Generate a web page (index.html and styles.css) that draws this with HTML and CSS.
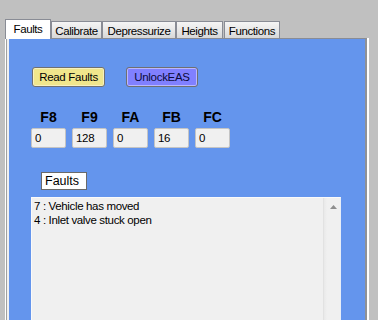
FILE: index.html
```html
<!DOCTYPE html>
<html>
<head>
<meta charset="utf-8">
<link rel="stylesheet" href="styles.css">
</head>
<body>
<div class="tabs">
  <div class="tab active">Faults</div>
  <div class="tab w-cal">Calibrate</div>
  <div class="tab w-dep">Depressurize</div>
  <div class="tab w-hei">Heights</div>
  <div class="tab w-fun">Functions</div>
</div>
<div class="panel">
  <div class="page">
    <div class="buttons">
      <button class="btn btn-read">Read Faults</button>
      <button class="btn btn-unlock">UnlockEAS</button>
    </div>
    <div class="fields">
      <div class="field"><div class="flabel">F8</div><div class="fbox">0</div></div>
      <div class="field"><div class="flabel">F9</div><div class="fbox">128</div></div>
      <div class="field"><div class="flabel">FA</div><div class="fbox">0</div></div>
      <div class="field"><div class="flabel">FB</div><div class="fbox">16</div></div>
      <div class="field"><div class="flabel">FC</div><div class="fbox">0</div></div>
    </div>
    <div class="caption">Faults</div>
    <div class="listbox">
      <div class="items">
        <div class="item">7 : Vehicle has moved</div>
        <div class="item">4 : Inlet valve stuck open</div>
      </div>
      <div class="scrollbar">
        <svg class="arrow" width="7" height="4" viewBox="0 0 7 4"><polygon points="3.5,0 7,4 0,4" fill="#8e8e8e"/></svg>
      </div>
    </div>
  </div>
</div>
</body>
</html>
```

FILE: styles.css
```css
html, body {
  margin: 0;
  padding: 0;
}
body {
  background: #c0c0c0;
  font-family: "Liberation Sans", Arial, sans-serif;
  font-size: 11px;
  color: #000;
  height: 320px;
  overflow: hidden;
}
.tabs {
  display: flex;
  align-items: flex-end;
  padding: 19px 0 0 5px;
  height: 19px;
}
.tab {
  box-sizing: border-box;
  height: 17px;
  border: 1px solid #898c95;
  border-bottom: none;
  background: linear-gradient(#f5f5f5, #e6e6e6 55%, #d8d8d8);
  text-align: center;
  font-size: 11.5px;
  line-height: 14px;
  padding-top: 2px;
  letter-spacing: -0.4px;
  white-space: nowrap;
}
.tab.active {
  width: 46px;
  height: 20px;
  background: #fff;
  margin-bottom: -1px;
  position: relative;
  z-index: 1;
  padding-top: 2px;
}
.w-cal { width: 51px; }
.w-dep { width: 74px; }
.w-hei { width: 47px; }
.w-fun { width: 56px; margin-left: 1px; }
.panel {
  box-sizing: border-box;
  margin-left: 6px;
  width: 361px;
  height: 282px;
  border-top: 1px solid #898c95;
  border-left: 1px solid #a0a0a0;
  border-right: 2px solid #8f9196;
  box-shadow: -1px 0 0 #fff, 2px 0 0 #fff;
  padding-left: 2px;
  background: #f0f0f0;
}
.page {
  background: #6495ed;
  height: 281px;
  box-sizing: border-box;
  padding: 28px 0 0 22px;
}
.buttons {
  display: flex;
  gap: 21px;
  margin-left: 1px;
}
.btn {
  box-sizing: border-box;
  height: 20px;
  border: 1px solid #707070;
  border-radius: 3px;
  box-shadow: inset 0 0 0 1px rgba(255,255,255,0.45);
  font-family: "Liberation Sans", Arial, sans-serif;
  font-size: 11.5px;
  letter-spacing: -0.3px;
  line-height: 16px;
  padding: 0;
  color: #000;
}
.btn-read { width: 73px; background: #f0e68c; }
.btn-unlock { width: 72px; background: #8080ff; color: #0a0a3a; }
.fields {
  display: grid;
  grid-template-columns: repeat(5, 35px);
  column-gap: 6px;
  margin-top: 23px;
}
.flabel {
  font-weight: bold;
  font-size: 14px;
  line-height: 14px;
  text-align: center;
}
.fbox {
  box-sizing: border-box;
  margin-top: 4px;
  height: 20px;
  border: 1px solid #c4c4c4;
  border-radius: 2px;
  background: #f0f0f0;
  padding-left: 3px;
  line-height: 18px;
  font-size: 11.5px;
  letter-spacing: -0.3px;
}
.caption {
  box-sizing: border-box;
  margin: 24px 0 0 10px;
  width: 46px;
  height: 18px;
  border: 1px solid #6a6a6a;
  background: #fff;
  font-size: 12.5px;
  line-height: 16px;
  padding-left: 3px;
}
.listbox {
  box-sizing: border-box;
  margin-top: 7px;
  width: 310px;
  height: 124px;
  border: 1px solid #fafafa;
  border-right-color: #e8eef8;
  border-bottom: none;
  background: #f0f0f0;
  display: flex;
}
.items {
  flex: 1;
  padding: 1px 2px;
}
.item {
  font-size: 11.5px;
  line-height: 14px;
  letter-spacing: -0.35px;
  white-space: nowrap;
}
.scrollbar {
  width: 16px;
  border-left: 1px solid #e2e2e2;
  background: linear-gradient(90deg, #e9e9e9, #f0f0f0 3px);
  display: flex;
  justify-content: center;
  padding-top: 7px;
  box-sizing: content-box;
}
.arrow {
  display: block;
  margin-left: 3px;
}
```
